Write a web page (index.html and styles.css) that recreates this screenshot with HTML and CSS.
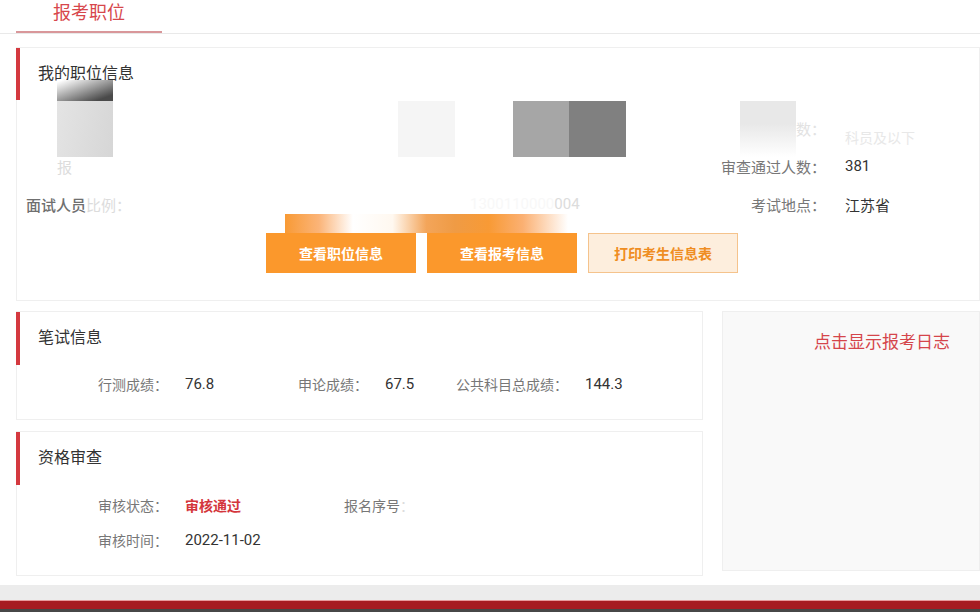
FILE: index.html
```html
<!DOCTYPE html>
<html lang="zh-CN">
<head>
<meta charset="utf-8">
<title>报考职位</title>
<link rel="stylesheet" href="styles.css">
</head>
<body>
<div class="page">
  <nav class="tabs">
    <div class="tab active">报考职位</div>
  </nav>

  <main class="content">
    <section class="card card-post">
      <h2 class="card-title">我的职位信息</h2>
      <div class="info-grid">
        <span class="label ghost"></span><span class="value ghost"></span>
        <span class="label ghost"></span><span class="value ghost"></span>
        <span class="label ghost-l">招考人数：</span><span class="value ghost-2">科员及以下</span>

        <span class="label label-left"><i class="fade">报</i></span><span class="value ghost"></span>
        <span class="label ghost"></span><span class="value ghost"></span>
        <span class="label">审查通过人数：</span><span class="value">381</span>

        <span class="label label-wide"><b class="strong">面试人员</b><i class="fade">比例：</i></span><span class="value ghost"></span>
        <span class="label ghost"></span><span class="value"><i class="fade-ghost">1300110000</i><i class="fade">004</i></span>
        <span class="label">考试地点：</span><span class="value">江苏省</span>
      </div>
      <div class="actions">
        <button class="btn btn-primary">查看职位信息</button>
        <button class="btn btn-primary">查看报考信息</button>
        <button class="btn btn-light">打印考生信息表</button>
      </div>
    </section>

    <div class="lower">
      <div class="lower-left">
        <section class="card card-exam">
          <h2 class="card-title">笔试信息</h2>
          <div class="score-grid">
            <div class="pair"><span class="label">行测成绩：</span><span class="value">76.8</span></div>
            <div class="pair"><span class="label">申论成绩：</span><span class="value">67.5</span></div>
            <div class="pair"><span class="label">公共科目总成绩：</span><span class="value">144.3</span></div>
          </div>
        </section>

        <section class="card card-review">
          <h2 class="card-title">资格审查</h2>
          <div class="review-grid">
            <div class="pair"><span class="label">审核状态：</span><span class="value status">审核通过</span></div>
            <div class="pair"><span class="label">报名序号<i class="fade">：</i></span><span class="value"></span></div>
            <div class="pair"><span class="label">审核时间：</span><span class="value">2022-11-02</span></div>
          </div>
        </section>
      </div>

      <aside class="log-panel">
        <a class="log-link">点击显示报考日志</a>
      </aside>
    </div>
  </main>

  <footer class="footer">
    <div class="footer-gray"></div>
    <div class="footer-red"></div>
  </footer>

  <div class="redact r-a"></div>
  <div class="redact r-b"></div>
  <div class="redact r-c"></div>
  <div class="redact r-d"></div>
  <div class="redact r-e"></div>
  <div class="redact r-f"></div>
  <div class="redact r-g"></div>
</div>
</body>
</html>
```

FILE: styles.css
```css
* { box-sizing: border-box; }

html, body {
  margin: 0;
  padding: 0;
  background: #ffffff;
}

body {
  font-family: Roboto, "Noto Sans CJK SC", "Noto Sans", sans-serif;
  color: #333333;
}

.page {
  position: relative;
  width: 980px;
  height: 612px;
  overflow: hidden;
}

/* ---------- tabs ---------- */
.tabs {
  display: flex;
  height: 34px;
  padding-left: 16px;
  border-bottom: 1px solid #e9e9e9;
}

.tab {
  width: 146px;
  height: 33px;
  line-height: 25px;
  text-align: center;
  font-size: 18px;
  color: #d7474c;
}

.tab.active {
  border-bottom: 2px solid #d9979a;
}

/* ---------- content ---------- */
.content {
  padding-left: 16px;
}

.card {
  background: #ffffff;
  border: 1px solid #efefef;
}

.card-title {
  margin: 0 0 0 -1px;
  height: 53px;
  line-height: 52px;
  padding-left: 18px;
  border-left: 4px solid #d4393f;
  font-size: 16px;
  font-weight: normal;
  color: #333333;
}

.card-post {
  margin-top: 13px;
  height: 254px;
}

.card-post .card-title {
  height: 52px;
}

.label {
  color: #777777;
  font-size: 15px;
  text-align: right;
  white-space: nowrap;
}

.value {
  color: #333333;
  font-size: 15px;
  white-space: nowrap;
}

.info-grid {
  display: grid;
  grid-template-columns: 114px 167px 115px 167px 170px 1fr;
  grid-auto-rows: 38px;
  column-gap: 19px;
  align-items: center;
  padding-top: 9px;
}

.ghost { color: #f6f6f6; }
.ghost-l { color: #e2e2e2; }
.ghost-2 { color: #e8e8e8; font-size: 14px; align-self: end; }
.strong { font-weight: 500; color: #6f6f6f; }
.fade { font-style: normal; color: #dcdcdc; }
.fade-ghost { font-style: normal; color: #f8f8f8; }
.label-wide { margin-left: -38px; }
.label-left { text-align: left; padding-left: 40px; }

.actions {
  display: flex;
  justify-content: center;
  gap: 11px;
  margin-top: 10px;
  padding-left: 8px;
}

.btn {
  width: 150px;
  height: 40px;
  border: 1px solid transparent;
  font-family: "Noto Sans CJK SC", sans-serif;
  font-size: 14px;
  font-weight: bold;
  cursor: pointer;
}

.btn-primary {
  background: #fb982c;
  color: #ffffff;
  border-color: #fb982c;
}

.btn-light {
  background: #fdeedd;
  color: #ef8d22;
  border-color: #f5c38c;
}

/* ---------- lower area ---------- */
.lower {
  display: flex;
  gap: 19px;
  margin-top: 10px;
}

.lower-left {
  width: 687px;
  display: flex;
  flex-direction: column;
  gap: 11px;
}

.card-exam { height: 109px; }
.card-review { height: 145px; }

.score-grid {
  display: grid;
  grid-template-columns: repeat(3, 200px);
  height: 38px;
  align-items: center;
}

.pair {
  display: flex;
  align-items: center;
  gap: 17px;
}

.pair .label {
  width: 151px;
  flex: none;
  font-size: 14px;
}

.review-grid {
  display: grid;
  grid-template-columns: repeat(2, 246px);
  grid-auto-rows: 35px;
  align-items: center;
  padding-top: 2px;
}

.status {
  color: #d4363c;
  font-weight: bold;
  font-size: 14px;
}

.log-panel {
  flex: 1;
  height: 260px;
  background: #f9f9f9;
  border: 1px solid #efefef;
  padding: 19px 29px 0 0;
  text-align: right;
}

.log-link {
  font-size: 17px;
  line-height: 22px;
  color: #d5454b;
  cursor: pointer;
}

/* ---------- footer ---------- */
.footer {
  position: absolute;
  left: 0;
  right: 0;
  bottom: 0;
}

.footer-gray {
  height: 15px;
  background: #ececec;
}

.footer-red {
  height: 12px;
  background: #a61b21;
  border-top: 1px solid #e79a9c;
  border-bottom: 3px solid #474747;
}

/* ---------- privacy redaction blocks (overlaid) ---------- */
.redact { position: absolute; }

.r-a {
  left: 57px; top: 80px; width: 56px; height: 21px;
  background: linear-gradient(160deg, #ffffff 5%, #9a9a9a 50%, #4a4a4a 85%);
}
.r-b {
  left: 57px; top: 101px; width: 56px; height: 56px;
  background: linear-gradient(100deg, #e4e4e4, #d6d6d6);
}
.r-c {
  left: 398px; top: 101px; width: 57px; height: 56px;
  background: #f5f5f5;
}
.r-d {
  left: 513px; top: 101px; width: 56px; height: 56px;
  background: #a6a6a6;
}
.r-e {
  left: 569px; top: 101px; width: 57px; height: 56px;
  background: #808080;
}
.r-f {
  left: 740px; top: 101px; width: 56px; height: 56px;
  background: linear-gradient(180deg, #e8e8e8 40%, #ffffff 100%);
}
.r-g {
  left: 285px; top: 214px; width: 283px; height: 19px;
  background: linear-gradient(90deg, #f89a35 0%, #fbb478 12%, #ffffff 24%, #fff8f0 38%, #f3a55a 50%, #ef9b45 60%, #f89a35 72%, #fbb072 84%, #ffffff 100%);
}
```
